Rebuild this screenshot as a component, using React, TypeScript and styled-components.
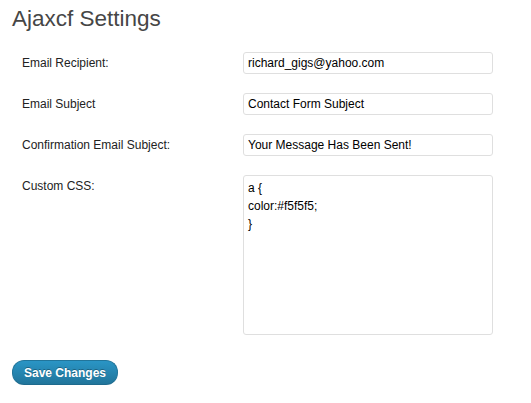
import React from "react";
import styled, { createGlobalStyle } from "styled-components";

const Global = createGlobalStyle`
  html, body { margin: 0; padding: 0; background: #ffffff; }
  body { font-family: "Liberation Sans", Arial, sans-serif; font-size: 12px; color: #333; }
`;

const Page = styled.div`
  padding: 4px 12px 0 12px;
`;

const Title = styled.h2`
  margin: 0;
  font-family: "Liberation Sans", Arial, sans-serif;
  font-weight: normal;
  font-size: 22.5px;
  line-height: 29px;
  color: #464646;
`;

const FormGrid = styled.div`
  display: grid;
  grid-template-columns: 221px 250px;
  row-gap: 19px;
  margin: 19px 0 0 10px;
  align-items: start;
`;

const Label = styled.label`
  padding-top: 4px;
  line-height: 15px;
  font-size: 12px;
  color: #222;
`;

const TextInput = styled.input`
  box-sizing: border-box;
  width: 250px;
  height: 22px;
  margin: 0;
  padding: 0 4px;
  border: 1px solid #dfdfdf;
  border-radius: 3px;
  font-family: "Liberation Sans", Arial, sans-serif;
  font-size: 12px;
  color: #000;
  background: #fff;
  outline: none;
`;

const TextArea = styled.textarea`
  box-sizing: border-box;
  width: 250px;
  height: 160px;
  margin: 0;
  padding: 3px 4px;
  border: 1px solid #dfdfdf;
  border-radius: 3px;
  font-family: "Liberation Sans", Arial, sans-serif;
  font-size: 12px;
  line-height: 18px;
  color: #000;
  background: #fff;
  resize: none;
  outline: none;
  display: block;
`;

const SaveButton = styled.button`
  display: block;
  margin-top: 25px;
  height: 25px;
  width: 106px;
  padding: 0;
  border: 1px solid #21759b;
  border-bottom-color: #1e6a8d;
  border-radius: 12px;
  background: linear-gradient(to bottom, #2a95c5, #21759b);
  color: #fff;
  font-family: "Liberation Sans", Arial, sans-serif;
  font-weight: bold;
  font-size: 12px;
  text-shadow: 0 -1px 0 rgba(0, 0, 0, 0.3);
  cursor: pointer;
`;

const fields = [
  { label: "Email Recipient:", value: "richard_gigs@yahoo.com" },
  { label: "Email Subject", value: "Contact Form Subject" },
  { label: "Confirmation Email Subject:", value: "Your Message Has Been Sent!" },
];

export default function App() {
  return (
    <Page>
      <Global />
      <Title>Ajaxcf Settings</Title>
      <FormGrid>
        {fields.map((f) => (
          <React.Fragment key={f.label}>
            <Label>{f.label}</Label>
            <TextInput type="text" defaultValue={f.value} />
          </React.Fragment>
        ))}
        <Label>Custom CSS:</Label>
        <TextArea defaultValue={"a {\ncolor:#f5f5f5;\n}"} />
      </FormGrid>
      <SaveButton type="button">Save Changes</SaveButton>
    </Page>
  );
}
